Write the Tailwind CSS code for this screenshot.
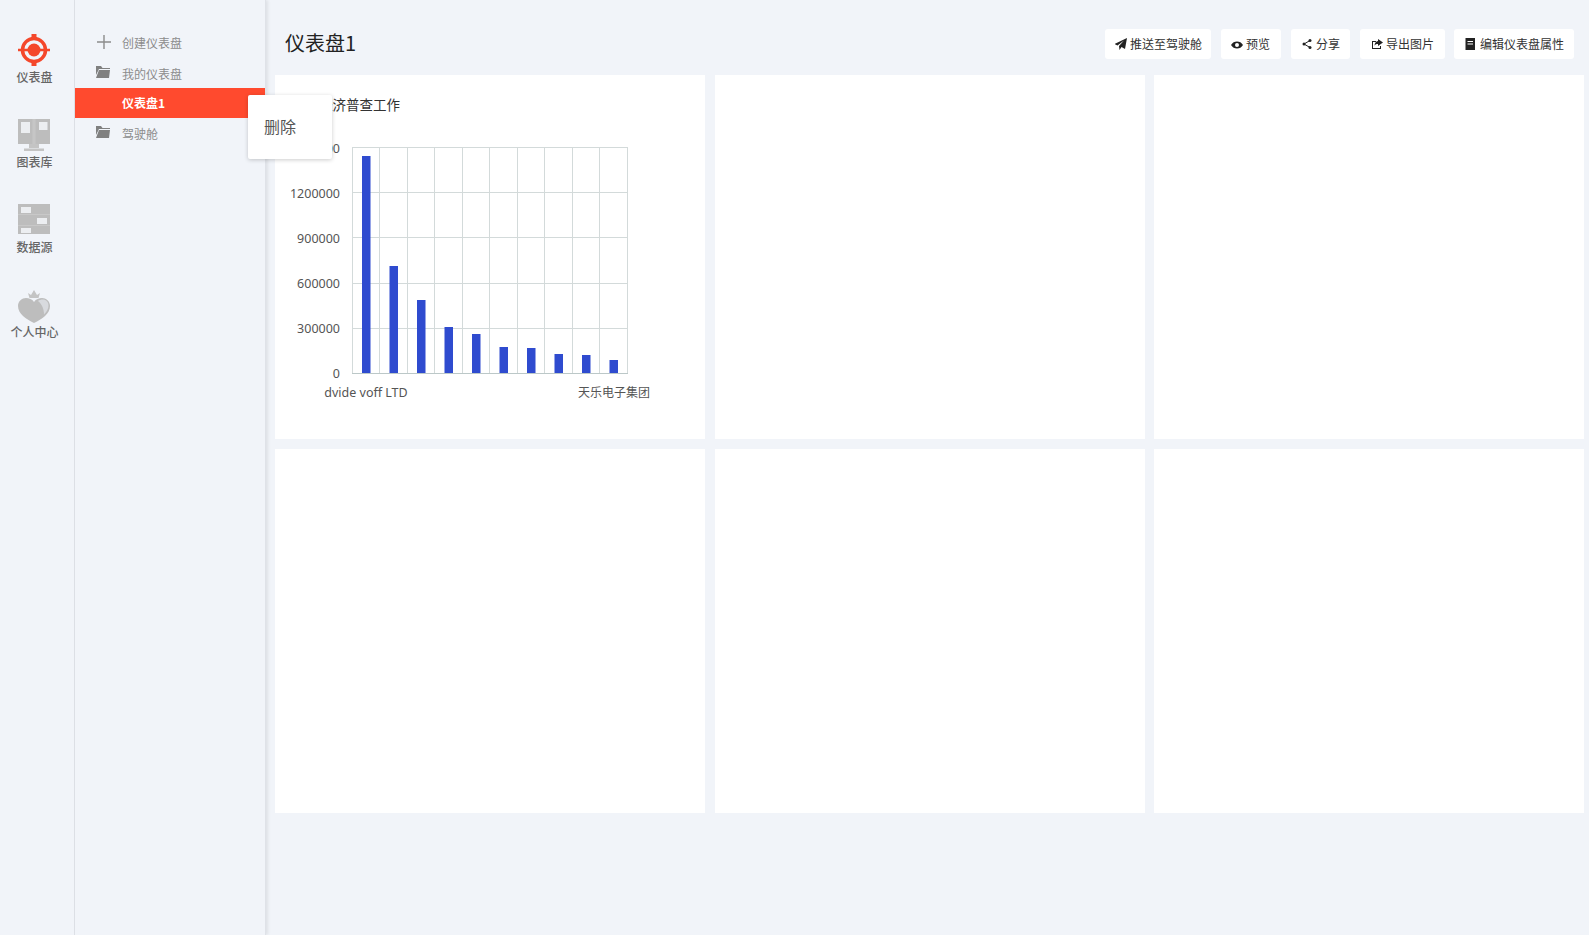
<!DOCTYPE html>
<html lang="zh-CN">
<head>
<meta charset="UTF-8">
<title>仪表盘</title>
<script src="https://cdn.jsdelivr.net/npm/@tailwindcss/browser@4"></script>
</head>
<body class="bg-[#f1f4f9] font-['Noto_Sans_CJK_SC','Noto_Sans',sans-serif] overflow-hidden">
<div class="flex h-[935px] relative">

    <!-- left rail -->
    <nav class="w-[75px] shrink-0 border-r border-[#dde0e6] pt-[34px] pr-[5px] flex flex-col items-center text-[12px] leading-[16px] text-[#666]">
        <a class="h-[85px] flex flex-col items-center">
            <svg class="w-[32px] h-[34px]" viewBox="0 0 32 34">
                <circle cx="16" cy="16" r="11.500" fill="none" stroke="#f4472b" stroke-width="3.500"/>
                <circle cx="16" cy="16" r="6.500" fill="#f4472b"/>
                <path d="M0 14.700h32v2.600h-32zM13.500 0h5v5h-5zM13.500 27h5v5h-5z" fill="#f4472b"/>
            </svg>
            <span class="mt-[1px] font-medium">仪表盘</span>
        </a>
        <a class="h-[85px] flex flex-col items-center">
            <svg class="w-[32px] h-[34px]" viewBox="0 0 32 34">
                <path d="M0 0h32v25h-32z" fill="#bdbdbd"/>
                <path d="M14.500 0h3v25h-3z" fill="#c6c6c6"/>
                <path d="M11 25h10v4h-10zM6 29.500h20v2.500h-20z" fill="#c4c4c4"/>
                <path d="M3 3h9v11h-9zM21 3h8.500v8h-8.500z" fill="#eceef1"/>
            </svg>
            <span class="mt-[1px] font-medium">图表库</span>
        </a>
        <a class="h-[85px] flex flex-col items-center">
            <svg class="w-[32px] h-[34px]" viewBox="0 0 32 34">
                <path d="M0 0h32v30h-32z" fill="#bdbdbd"/>
                <path d="M0 10h32v1h-32zM0 21h32v1h-32z" fill="#c8c8c8"/>
                <path d="M3 3h10v6h-10zM19 14h10v6h-10zM3 24h10v5h-10z" fill="#eceef1"/>
            </svg>
            <span class="mt-[1px] font-medium">数据源</span>
        </a>
        <a class="h-[85px] flex flex-col items-center">
            <svg class="w-[32px] h-[34px]" viewBox="0 0 32 34">
                <path d="M11.500 9l-1.500-5 3 2 3-5 3 5 3-2-1.500 5z" fill="#c4c4c4"/>
                <path d="M16 34c-8-4-16-9-16-17 0-5 4-8 8-8 3 0 6 1 8 4 2-3 5-4 8-4 4 0 8 3 8 8 0 8-8 13-16 17z" fill="#bdbdbd"/>
                <path d="M20 12c1-1 3-1.500 5-1.500 3 0 5.500 2.500 5.500 6 0 3-1.500 6-4.500 9 0-5-2-10.500-6-13.500z" fill="#d8dade"/>
            </svg>
            <span class="mt-[1px] font-medium whitespace-nowrap">个人中心</span>
        </a>
    </nav>

    <!-- menu -->
    <aside class="w-[191px] shrink-0 border-r border-[#dfe2e8] shadow-[2px_0_3px_rgba(0,0,0,0.08)] pt-[27px] text-[12px] text-[#8c8c8c]">
        <a class="h-[30px] flex items-center pl-[22px]">
            <svg class="w-[14px] h-[14px] mr-[11px]" viewBox="0 0 14 14"><path d="M6.300 0h1.400v14h-1.400zM0 6.300h14v1.400h-14z" fill="#8c8c8c"/></svg>
            <span class="mt-[1px]">创建仪表盘</span>
        </a>
        <a class="h-[30px] flex items-center pl-[21px] mt-[1px]">
            <svg class="w-[14px] h-[14px] mr-[12px] -mt-[2px]" viewBox="0 0 14 14"><path d="M0 1h5l1.500 2h7.500v1h-11l-3 6zM3 5h11l-1 8h-13z" fill="#808080"/></svg>
            <span class="mt-[1px]">我的仪表盘</span>
        </a>
        <a class="h-[30px] flex items-center pl-[47px] bg-[#ff4a2e] text-white font-bold">仪表盘1</a>
        <a class="h-[30px] flex items-center pl-[21px]">
            <svg class="w-[14px] h-[14px] mr-[12px] -mt-[2px]" viewBox="0 0 14 14"><path d="M0 1h5l1.500 2h7.500v1h-11l-3 6zM3 5h11l-1 8h-13z" fill="#808080"/></svg>
            <span class="mt-[1px]">驾驶舱</span>
        </a>
    </aside>

    <!-- popover over the menu edge -->
    <div class="absolute left-[248px] top-[95px] w-[84px] h-[64px] pb-[2px] z-10 bg-white rounded-[2px] shadow-[0_1px_4px_rgba(0,0,0,0.2)] flex items-center pl-[16px] text-[16px] text-[#555]">删除</div>

    <!-- main -->
    <main class="flex-1 pl-[9px] pr-[5px]">
        <header class="h-[75px] flex items-start justify-between">
            <h1 class="text-[20px] leading-[28px] mt-[29px] ml-[10px] text-[#222]">仪表盘1</h1>
            <div class="flex gap-[10px] mt-[29px] mr-[10px] text-[12px] text-[#333]">
                <button class="h-[30px] pl-[10px] pr-[9px] bg-white rounded-[3px] flex items-center gap-[3px]">
                    <svg class="w-[12px] h-[12px]" viewBox="0 0 12 12"><path d="M12 0l-2 11-3.500-2-2 3-.5-4 5-5.500-6.500 5-3-1.500z" fill="#222"/></svg>
                    推送至驾驶舱
                </button>
                <button class="h-[30px] pl-[10px] pr-[11px] bg-white rounded-[3px] flex items-center gap-[3px]">
                    <svg class="w-[12px] h-[12px] mt-[2px]" viewBox="0 0 12 12"><path fill-rule="evenodd" d="M0 6c1.500-2.500 3.500-3.500 6-3.500s4.500 1 6 3.500c-1.500 2.500-3.500 3.500-6 3.500s-4.500-1-6-3.500zM6 4a2 2 0 1 0 0 4 2 2 0 0 0 0-4z" fill="#222"/></svg>
                    预览
                </button>
                <button class="h-[30px] px-[10px] bg-white rounded-[3px] flex items-center gap-[3px]">
                    <svg class="w-[12px] h-[12px]" viewBox="0 0 12 12"><circle cx="9" cy="2.500" r="1.500" fill="#222"/><circle cx="9" cy="9.500" r="1.500" fill="#222"/><circle cx="3" cy="6" r="1.500" fill="#222"/><path d="M9 2.500l-6 3.500 6 3.500" fill="none" stroke="#222"/></svg>
                    分享
                </button>
                <button class="h-[30px] px-[11px] -mr-[1px] bg-white rounded-[3px] flex items-center gap-[3px]">
                    <svg class="w-[12px] h-[12px]" viewBox="0 0 12 12"><path d="M1 3h4v1h-3v6h7v-2h1v3h-9z" fill="#222"/><path d="M7 1l5 3.500-5 3.500v-2c-2 0-3 .5-3.500 2 0-3 1.500-4.500 3.500-5z" fill="#222"/></svg>
                    导出图片
                </button>
                <button class="h-[30px] px-[10px] bg-white rounded-[3px] flex items-center gap-[4px]">
                    <svg class="w-[12px] h-[12px]" viewBox="0 0 12 12"><path fill-rule="evenodd" d="M1.500 0h9.500v12h-9.500zM3.500 3v1h5.500v-1zM3.500 5.500v1h5.500v-1z" fill="#222"/></svg>
                    编辑仪表盘属性
                </button>
            </div>
        </header>

        <section class="grid grid-cols-3 gap-x-[9.5px] gap-y-[10px]">
            <div class="h-[364px] bg-white relative">
                <h2 class="absolute left-[44px] top-[20px] text-[13.5px] leading-[18px] text-[#333]">经济普查工作</h2>
                <svg class="absolute -left-[1px] top-0 font-['Noto_Sans','Noto_Sans_CJK_SC',sans-serif]" width="430" height="364" viewBox="0 0 430 364">
                    <g stroke="#d3dada" fill="none">
                        <path d="M78 72.500h275M78 117.500h275M78 162.500h275M78 208.500h275M78 253.500h275"/>
                        <path d="M78.500 72v226M105.500 72v226M133.500 72v226M160.500 72v226M188.500 72v226M215.500 72v226M243.500 72v226M270.500 72v226M298.500 72v226M325.500 72v226M353.500 72v226"/>
                    </g>
                    <path d="M78 298.500h276" stroke="#bcc8c8"/>
                    <g fill="#2f4bcf">
                        <rect x="88" y="81" width="8.500" height="217"/>
                        <rect x="115.500" y="191" width="8.500" height="107"/>
                        <rect x="143" y="225" width="8.500" height="73"/>
                        <rect x="170.500" y="252" width="8.500" height="46"/>
                        <rect x="198" y="259" width="8.500" height="39"/>
                        <rect x="225.500" y="272" width="8.500" height="26"/>
                        <rect x="253" y="273" width="8.500" height="25"/>
                        <rect x="280.500" y="279" width="8.500" height="19"/>
                        <rect x="308" y="280" width="8.500" height="18"/>
                        <rect x="335.500" y="285" width="8.500" height="13"/>
                    </g>
                    <g font-size="12.500" fill="#555" text-anchor="end">
                        <text x="66" y="78">1500000</text>
                        <text x="66" y="123">1200000</text>
                        <text x="66" y="168">900000</text>
                        <text x="66" y="213">600000</text>
                        <text x="66" y="258">300000</text>
                        <text x="66" y="303">0</text>
                    </g>
                    <g font-size="12.500" fill="#555" text-anchor="middle">
                        <text x="92" y="322">dvide voff LTD</text>
                        <text x="340" y="322" font-size="12">天乐电子集团</text>
                    </g>
                </svg>
            </div>
            <div class="h-[364px] bg-white"></div>
            <div class="h-[364px] bg-white"></div>
            <div class="h-[364px] bg-white"></div>
            <div class="h-[364px] bg-white"></div>
            <div class="h-[364px] bg-white"></div>
        </section>
    </main>
</div>
</body>
</html>
